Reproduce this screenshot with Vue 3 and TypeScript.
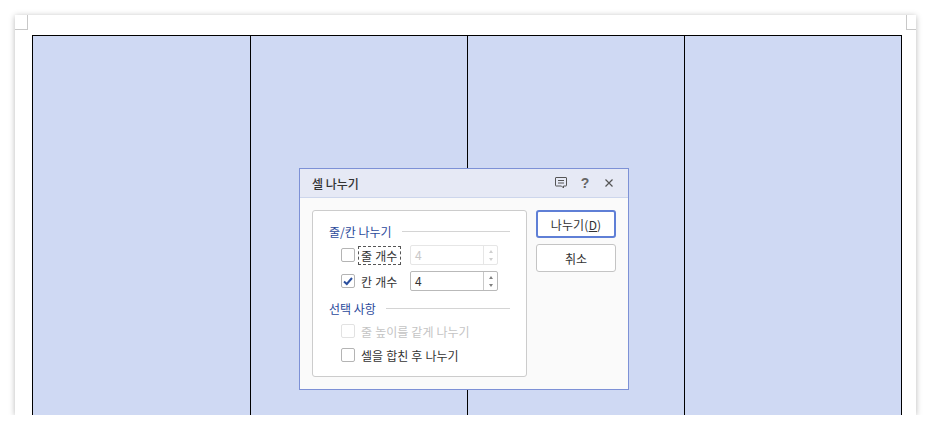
<template>
  <div class="page">
    <span class="corner corner-left"></span>
    <span class="corner corner-right"></span>
    <div class="table">
      <div v-for="i in 4" :key="i" class="cell"></div>
    </div>
  </div>

  <div class="dialog">
    <div class="title-bar">
      <span class="title">셀 나누기</span>
      <div class="title-icons">
        <svg width="14" height="14" viewBox="0 0 14 14" fill="none" stroke="#555" stroke-width="1">
          <path d="M2 1.500h10q.5 0 .5.5v7.500q0 .5-.5.5h-2.500v2l-2-2h-5.500q-.5 0-.5-.5v-7.500q0-.5.5-.5z" />
          <path d="M4 4.500h6M4 7h6" />
        </svg>
        <span class="help">?</span>
        <svg width="12" height="12" viewBox="0 0 12 12" fill="none" stroke="#555" stroke-width="1.200">
          <path d="M2.500 2.500l7 7M9.500 2.500l-7 7" />
        </svg>
      </div>
    </div>
    <div class="body">
      <div class="group">
        <div class="legend"><span>줄/칸 나누기</span><i></i></div>
        <div class="row">
          <span class="check"></span>
          <span class="label focused">줄 개수</span>
          <div class="spin disabled">
            <span class="value">4</span>
            <span class="arrows"><b class="up"></b><b class="down"></b></span>
          </div>
        </div>
        <div class="row">
          <span class="check">
            <svg width="12" height="12" viewBox="0 0 12 12" fill="none" stroke="#2b4f9e" stroke-width="2">
              <path d="M2 6.500l2.800 2.500L10 3" />
            </svg>
          </span>
          <span class="label">칸 개수</span>
          <div class="spin">
            <span class="value">4</span>
            <span class="arrows"><b class="up"></b><b class="down"></b></span>
          </div>
        </div>
        <div class="legend second"><span>선택 사항</span><i></i></div>
        <div class="row option off">
          <span class="check"></span>
          <span class="label">줄 높이를 같게 나누기</span>
        </div>
        <div class="row option">
          <span class="check"></span>
          <span class="label">셀을 합친 후 나누기</span>
        </div>
      </div>
      <div class="actions">
        <button class="btn primary">나누기(<u>D</u>)</button>
        <button class="btn">취소</button>
      </div>
    </div>
  </div>
</template>

<script setup lang="ts">
</script>

<style>
html,
body {
  background: #fff;
  overflow: hidden;
}
</style>

<style scoped>
.page {
  position: relative;
  box-sizing: border-box;
  width: 901px;
  height: 400px;
  margin: 15px 0 0 15px;
  padding: 20px 0 0 17px;
  background: #fff;
  overflow: hidden;
  box-shadow: 0 1px 6px rgba(0, 0, 0, 0.28);
}

.corner {
  position: absolute;
  top: 0;
  width: 12px;
  height: 14px;
  border-bottom: 1px solid #c8c8c8;
}
.corner-left {
  left: 0;
  border-right: 1px solid #c8c8c8;
}
.corner-right {
  right: 0;
  width: 9px;
  border-left: 1px solid #c8c8c8;
}

.table {
  display: grid;
  grid-template-columns: 218px 217px 217px 217px;
  width: 870px;
  height: 420px;
  box-sizing: border-box;
  border-top: 1px solid #000;
  border-right: 1px solid #000;
}
.cell {
  background: #cfd9f3;
  border-left: 1px solid #000;
}

.dialog {
  position: absolute;
  left: 299px;
  top: 168px;
  box-sizing: border-box;
  width: 330px;
  height: 222px;
  border: 1px solid #7d91d6;
  background: #fafafa;
  font-family: "Noto Sans CJK KR", sans-serif;
  font-size: 12px;
  color: #333;
}

.title-bar {
  display: flex;
  align-items: center;
  justify-content: space-between;
  box-sizing: border-box;
  height: 29px;
  padding: 0 13px 0 12px;
  background: #e6e9f5;
  border-bottom: 1px solid #cdd6ec;
}
.title {
  font-weight: 500;
  color: #333;
}
.title-icons {
  display: flex;
  align-items: center;
  gap: 12px;
}
.title-icons svg:first-child {
  margin-right: -1px;
}
.help {
  width: 12px;
  text-align: center;
  font-family: "Liberation Sans", sans-serif;
  font-weight: 700;
  font-size: 14px;
  color: #666;
}

.body {
  display: flex;
  align-items: flex-start;
  gap: 9px;
  padding: 12px 12px 0;
}

.group {
  box-sizing: border-box;
  width: 215px;
  height: 167px;
  padding: 11px 16px 0;
  background: #fff;
  border: 1px solid #ccc;
  border-radius: 3px;
}

.legend {
  display: flex;
  align-items: center;
  gap: 10px;
  height: 18px;
  color: #2b4a9b;
}
.legend i {
  flex: 1;
  height: 1px;
  background: #d4d4d4;
}
.legend.second {
  margin-top: 8px;
}

.row {
  display: flex;
  align-items: center;
  height: 20px;
  margin: 5px 0 0 12px;
}
.row + .row {
  margin-top: 6px;
}
.legend + .row {
  margin-top: 5px;
}
.option {
  height: 18px;
}
.option + .option {
  margin-top: 6px;
}
.legend + .option {
  margin-top: 5px;
}

.check {
  display: flex;
  align-items: center;
  justify-content: center;
  box-sizing: border-box;
  width: 14px;
  height: 14px;
  background: #fff;
  border: 1px solid #b4b4b4;
  border-radius: 2px;
}

.label {
  box-sizing: border-box;
  width: 43px;
  height: 19px;
  margin-left: 3px;
  padding-left: 2px;
  white-space: nowrap;
  word-spacing: 0.4px;
  line-height: 18px;
  border: 1px solid transparent;
}
.label.focused {
  border: 1px dashed #555;
}
.option .label {
  width: auto;
}
.off .check {
  border-color: #e2e2e2;
}
.off .label {
  color: #c4c4c4;
}

.spin {
  display: flex;
  box-sizing: border-box;
  width: 88px;
  height: 20px;
  margin-left: 9px;
  border: 1px solid #b9b9b9;
  border-radius: 2px;
  background: #fff;
}
.spin.disabled {
  border-color: #e6e6e6;
  color: #c8c8c8;
}
.value {
  flex: 1;
  padding-left: 4px;
  line-height: 18px;
}
.arrows {
  display: flex;
  flex-direction: column;
  align-items: center;
  justify-content: center;
  gap: 5px;
  width: 13px;
  border-left: 1px solid #c9c9c9;
}
.disabled .arrows {
  border-left-color: #e6e6e6;
}
.arrows b {
  width: 0;
  height: 0;
  border-left: 2.5px solid transparent;
  border-right: 2.5px solid transparent;
}
.arrows .up {
  border-bottom: 3px solid #808080;
}
.arrows .down {
  border-top: 3px solid #808080;
}
.disabled .arrows .up {
  border-bottom-color: #cfcfcf;
}
.disabled .arrows .down {
  border-top-color: #cfcfcf;
}

.actions {
  display: flex;
  flex-direction: column;
  gap: 6px;
}
.btn {
  box-sizing: border-box;
  width: 80px;
  height: 28px;
  padding: 0;
  font: inherit;
  color: #333;
  background: #fff;
  border: 1px solid #c4c4c4;
  border-radius: 3px;
}
.btn.primary {
  border: 2px solid #5f7fd6;
  letter-spacing: 0.2px;
}
</style>
